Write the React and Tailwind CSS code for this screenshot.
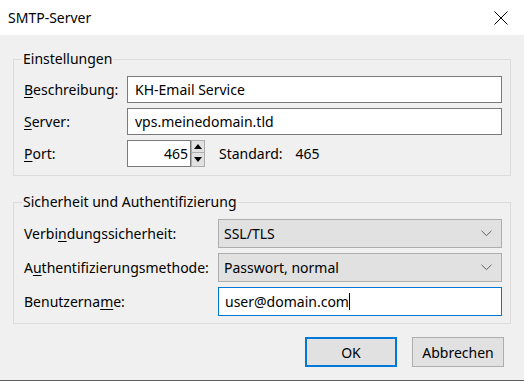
import React from "react";

const U = ({ children }) => <span className="underline underline-offset-2">{children}</span>;

function Chevron() {
  return (
    <svg width="11" height="7" viewBox="0 0 11 7" className="shrink-0">
      <path d="M0.5 0.8 L5.5 5.6 L10.5 0.8" fill="none" stroke="#5f5f5f" strokeWidth="1" />
    </svg>
  );
}

function Select({ value }) {
  return (
    <div className="flex-1 h-[29px] border border-[#adadad] bg-[#e1e1e1] flex items-center pl-[5px] pr-[9px]">
      <span className="flex-1">{value}</span>
      <Chevron />
    </div>
  );
}

export default function App() {
  return (
    <div
      className="w-[524px] h-[381px] bg-[#f0f0f0] text-[14px] text-black flex flex-col border-b border-[#5c5c5c] overflow-hidden"
      style={{ fontFamily: '"Noto Sans", "Open Sans", sans-serif' }}
    >
      {/* Title bar */}
      <div className="h-[35px] bg-white flex items-center justify-between pl-[8px] pr-[16px] shrink-0">
        <span className="text-[14px]">SMTP-Server</span>
        <svg width="14" height="14" viewBox="0 0 14 14">
          <path d="M0.5 0.5 L13.5 13.5 M13.5 0.5 L0.5 13.5" stroke="#000" strokeWidth="1" />
        </svg>
      </div>

      <div className="px-[13px] pt-[14px] flex flex-col">
        {/* Einstellungen */}
        <fieldset className="border border-[#dcdcdc] pl-[10px] pr-[8px] pt-[7px] pb-[8px] m-0 min-w-0">
          <legend className="-ml-[2px] px-px leading-[20px]">Einstellungen</legend>
          <div className="flex flex-col gap-[5px]">
            <div className="flex items-center h-[27px]">
              <span className="w-[103px] shrink-0"><U>B</U>eschreibung:</span>
              <div className="flex-1 h-[27px] border border-[#7a7a7a] bg-white flex items-center pl-[7px]">KH-Email Service</div>
            </div>
            <div className="flex items-center h-[27px]">
              <span className="w-[103px] shrink-0"><U>S</U>erver:</span>
              <div className="flex-1 h-[27px] border border-[#7a7a7a] bg-white flex items-center pl-[7px]">vps.meinedomain.tld</div>
            </div>
            <div className="flex items-center h-[27px]">
              <span className="w-[103px] shrink-0"><U>P</U>ort:</span>
              <div className="w-[64px] h-[27px] border border-[#7a7a7a] bg-white flex items-center justify-end pr-[2px]">465</div>
              <div className="w-[14px] h-[27px] flex flex-col">
                <div className="h-[13px] border border-[#adadad] bg-[#e1e1e1] flex items-center justify-center">
                  <svg width="8" height="5" viewBox="0 0 8 5"><path d="M4 0 L8 5 L0 5 Z" fill="#000" /></svg>
                </div>
                <div className="h-[14px] border border-t-0 border-[#adadad] bg-[#e1e1e1] flex items-center justify-center">
                  <svg width="8" height="5" viewBox="0 0 8 5"><path d="M0 0 L8 0 L4 5 Z" fill="#000" /></svg>
                </div>
              </div>
              <span className="ml-[14px]">Standard:</span>
              <span className="ml-[13px]">465</span>
            </div>
          </div>
        </fieldset>

        {/* Sicherheit */}
        <fieldset className="mt-[16px] border border-[#dcdcdc] pl-[10px] pr-[8px] pt-[7px] pb-[7px] m-0 min-w-0">
          <legend className="-ml-[2px] px-px leading-[20px]">Sicherheit und Authentifizierung</legend>
          <div className="flex flex-col gap-[5px]">
            <div className="flex items-center">
              <span className="w-[194px] shrink-0">Verbi<U>n</U>dungssicherheit:</span>
              <Select value="SSL/TLS" />
            </div>
            <div className="flex items-center">
              <span className="w-[194px] shrink-0">A<U>u</U>thentifizierungsmethode:</span>
              <Select value="Passwort, normal" />
            </div>
            <div className="flex items-center">
              <span className="w-[194px] shrink-0">Benutzerna<U>m</U>e:</span>
              <div className="flex-1 h-[29px] border border-[#0078d7] bg-white flex items-center pl-[6px]">
                <span>user@domain.com</span>
                <span className="w-px h-[17px] bg-black"></span>
              </div>
            </div>
          </div>
        </fieldset>

        {/* Buttons */}
        <div className="mt-[13px] flex justify-end gap-[15px] pr-[7px]">
          <button className="w-[92px] h-[30px] border-2 border-[#0078d7] bg-[#e1e1e1]">OK</button>
          <button className="w-[92px] h-[30px] border border-[#adadad] bg-[#e1e1e1]">Abbrechen</button>
        </div>
      </div>
    </div>
  );
}
